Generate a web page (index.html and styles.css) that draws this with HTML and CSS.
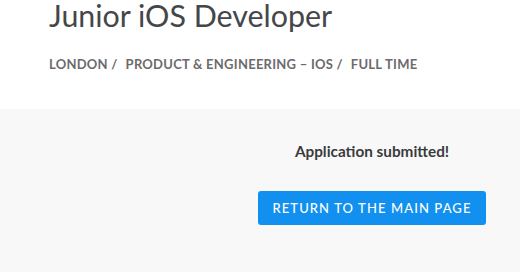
FILE: index.html
```html
<!DOCTYPE html>
<html>
<head>
<meta charset="utf-8">
<link rel="stylesheet" href="styles.css">
</head>
<body>
<header class="job-header">
  <h1 class="job-title">Junior iOS Developer</h1>
  <div class="job-meta">
    <span class="meta-item">London /</span>
    <span class="meta-item">Product &amp; Engineering – iOS /</span>
    <span class="meta-item">Full time</span>
  </div>
</header>
<main class="result">
  <div class="spacer"></div>
  <div class="result-col">
    <p class="result-msg">Application submitted!</p>
    <a class="btn-main" href="#">Return to the main page</a>
  </div>
</main>
</body>
</html>
```

FILE: styles.css
```css
html, body {
  margin: 0;
  padding: 0;
  height: 100%;
}
body {
  font-family: Lato, "Noto Sans", sans-serif;
  background: #f8f8f8;
  display: flex;
  flex-direction: column;
}
.job-header {
  background: #ffffff;
  padding: 0 0 38px 49px;
}
.job-title {
  margin: 0;
  font-size: 30.4px;
  line-height: 1;
  font-weight: 400;
  color: #444649;
}
.job-meta {
  margin-top: 28px;
  display: flex;
  gap: 8px;
  font-size: 13px;
  line-height: 1;
  font-weight: 700;
  letter-spacing: 0.25px;
  text-transform: uppercase;
  color: #6b6b6d;
}
.result {
  flex: 1;
  display: grid;
  grid-template-columns: 224px 1fr;
  padding-top: 33px;
}
.result-col {
  display: flex;
  flex-direction: column;
  align-items: center;
}
.result-msg {
  margin: 0;
  font-size: 15.3px;
  line-height: 1.2;
  font-weight: 700;
  color: #3a3b3d;
}
.btn-main {
  margin-top: 30px;
  display: block;
  box-sizing: border-box;
  height: 34px;
  line-height: 34px;
  padding: 0 14px;
  background: #1190ef;
  color: #ffffff;
  border-radius: 3px;
  font-size: 13px;
  font-weight: 500;
  letter-spacing: 1.1px;
  text-transform: uppercase;
  text-decoration: none;
}
```
